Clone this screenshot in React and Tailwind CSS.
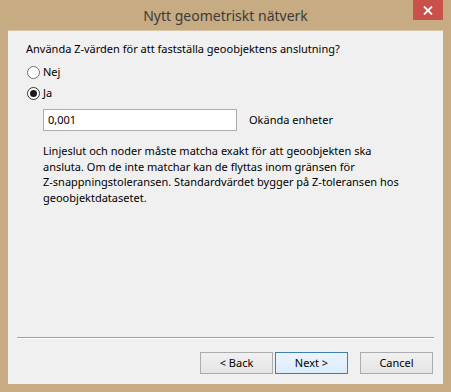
export default function App() {
    return (
        <div
            className="w-[451px] h-[392px] bg-[#c6ab83] flex flex-col text-black"
            style={{ fontFamily: '"Noto Sans", "Open Sans", sans-serif' }}
        >
            {/* Title bar */}
            <div className="relative h-[30px] flex items-center justify-center">
                <span className="text-[14px] text-[#3b3b3b] leading-none pt-[1px]">Nytt geometriskt nätverk</span>
                <div className="absolute top-0 right-[8px] w-[30px] h-[20px] bg-[#c9504b] flex items-center justify-center">
                    <svg width="10" height="9" viewBox="0 0 10 9">
                        <path d="M1 0.5 L9 8.5 M9 0.5 L1 8.5" stroke="white" strokeWidth="1.8" />
                    </svg>
                </div>
            </div>

            {/* Client area */}
            <div className="mx-[8px] mb-[8px] flex-1 bg-[#f0f0f0] border-t border-[#d8c7aa] flex flex-col text-[11px] leading-[16px]">
                <div className="pl-[18px] pt-[10px]">
                    Använda Z-värden för att fastställa geoobjektens anslutning?
                </div>

                {/* Radio: Nej */}
                <div className="flex items-center pl-[19px] mt-[7px] h-[16px]">
                    <span className="w-[13px] h-[13px] rounded-full border border-[#707070] bg-white" />
                    <span className="ml-[3px]">Nej</span>
                </div>

                {/* Radio: Ja */}
                <div className="flex items-center pl-[19px] mt-[5px] h-[16px]">
                    <span className="w-[13px] h-[13px] rounded-full border border-[#333] bg-white flex items-center justify-center">
                        <span className="w-[7px] h-[7px] rounded-full bg-[#1a1a1a]" />
                    </span>
                    <span className="ml-[3px]">Ja</span>
                </div>

                {/* Tolerance input */}
                <div className="flex items-center pl-[35px] mt-[8px]">
                    <div className="w-[194px] h-[22px] border border-[#abadb3] bg-white flex items-center pl-[4px]">
                        0,001
                    </div>
                    <span className="ml-[12px]">Okända enheter</span>
                </div>

                {/* Help text */}
                <p className="pl-[35px] mt-[12px] leading-[15.7px] whitespace-nowrap">
                    Linjeslut och noder måste matcha exakt för att geoobjekten ska
                    <br />
                    ansluta. Om de inte matchar kan de flyttas inom gränsen för
                    <br />
                    Z-snappningstoleransen. Standardvärdet bygger på Z-toleransen hos
                    <br />
                    geoobjektdatasetet.
                </p>

                <div className="flex-1" />

                {/* Separator */}
                <div className="mx-[9px] border-t border-[#a0a0a0] border-b border-b-white" />

                {/* Buttons */}
                <div className="flex justify-end pr-[10px] pt-[13px] pb-[10px] gap-[2px]">
                    <button className="w-[73px] h-[22px] border border-[#acacac] bg-gradient-to-b from-[#f0f0f0] to-[#e5e5e5] text-[11px]">
                        &lt; Back
                    </button>
                    <button className="w-[73px] h-[22px] border border-[#3c7fb1] bg-gradient-to-b from-[#ecf4fc] to-[#dcecfc] text-[11px]">
                        Next &gt;
                    </button>
                    <button className="ml-[10px] w-[73px] h-[22px] border border-[#acacac] bg-gradient-to-b from-[#f0f0f0] to-[#e5e5e5] text-[11px]">
                        Cancel
                    </button>
                </div>
            </div>
        </div>
    );
}
